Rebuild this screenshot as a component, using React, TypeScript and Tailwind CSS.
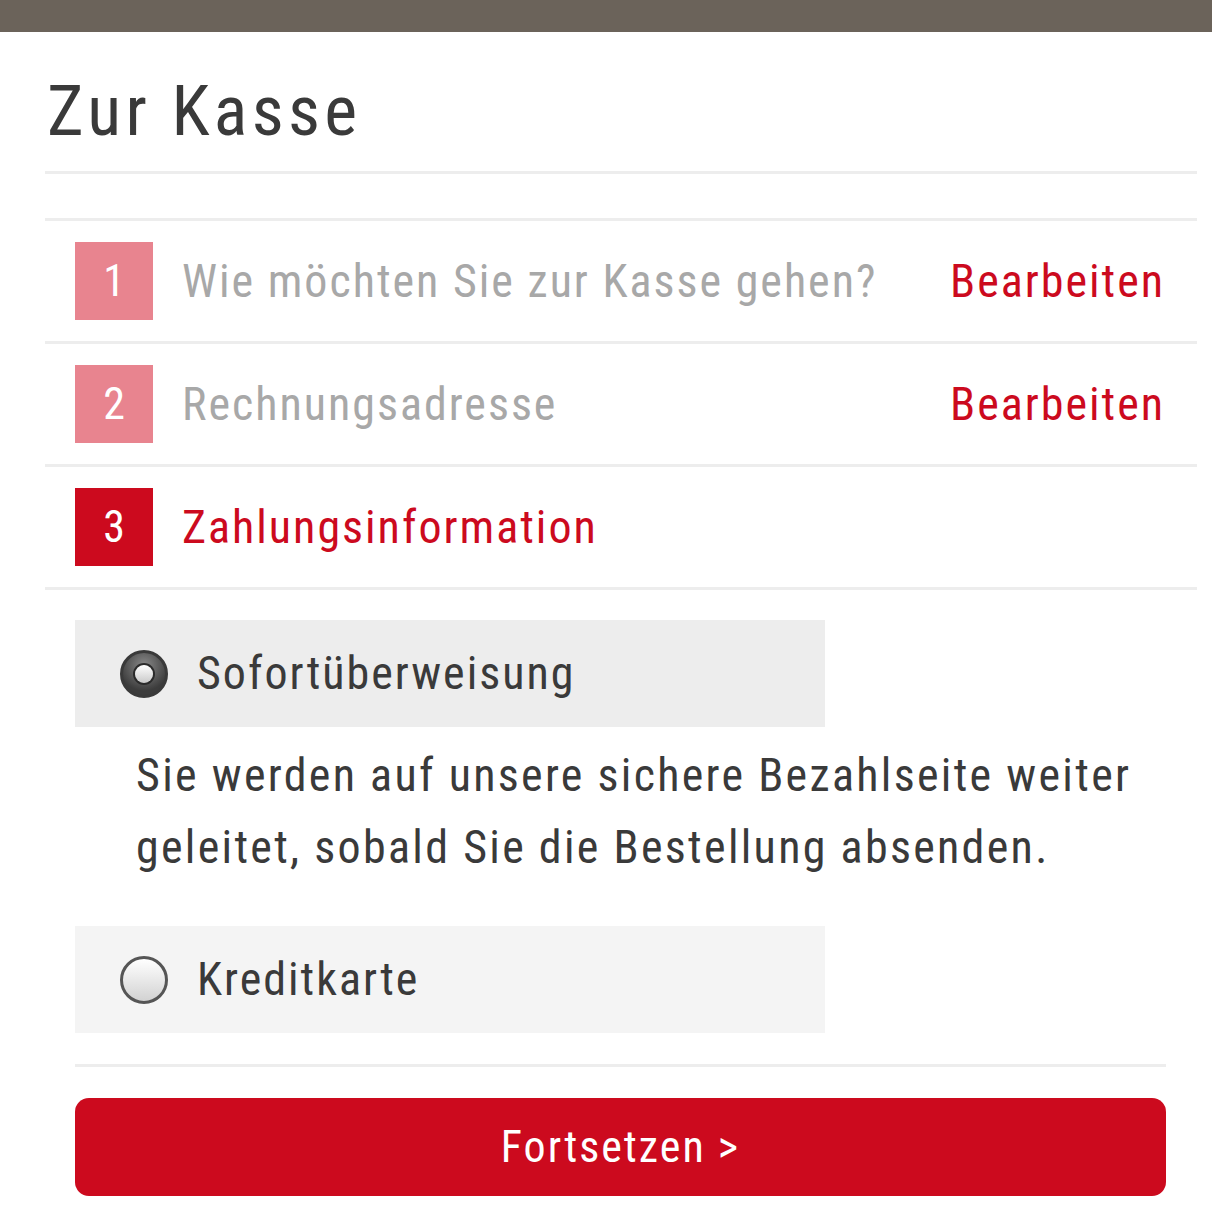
import React from "react";

function Radio({ checked }: { checked: boolean }) {
  if (checked) {
    return (
      <span className="relative flex h-[48px] w-[48px] shrink-0 items-center justify-center rounded-full border-[3px] border-[#3a3a3a] bg-[radial-gradient(circle_at_50%_30%,#8a8a8a,#3c3c3c_70%)]">
        <span className="h-[18px] w-[18px] rounded-full bg-[linear-gradient(#ffffff,#c9c9c9)] shadow-[0_0_0_2px_#2a2a2a]" />
      </span>
    );
  }
  return (
    <span className="h-[48px] w-[48px] shrink-0 rounded-full border-[3px] border-[#555] bg-[linear-gradient(#ffffff,#d2d2d2)]" />
  );
}

function StepRow({
  n,
  label,
  active,
  edit,
}: {
  n: number;
  label: string;
  active?: boolean;
  edit?: boolean;
}) {
  return (
    <div className="flex h-[123px] items-center border-b-[3px] border-[#ededed] pl-[30px] pr-[32px]">
      <div
        className={
          active
            ? "flex h-[78px] w-[78px] shrink-0 items-center justify-center bg-[#cc0a1e] text-[44px] text-white"
            : "flex h-[78px] w-[78px] shrink-0 items-center justify-center bg-[#e8848f] text-[44px] text-white"
        }
      >
        {n}
      </div>
      <div
        className={
          active
            ? "ml-[29px] flex-1 whitespace-nowrap text-[46px] tracking-[2px] text-[#cc0a1e]"
            : "ml-[29px] flex-1 whitespace-nowrap text-[46px] tracking-[2px] text-[#a8a8a8]"
        }
      >
        {label}
      </div>
      {edit && (
        <div className="whitespace-nowrap text-[46px] tracking-[2px] text-[#cc0a1e]">Bearbeiten</div>
      )}
    </div>
  );
}

export default function App() {
  return (
    <div className="min-h-[1213px] w-[1212px] bg-white font-['Roboto',sans-serif] font-stretch-[75%] text-[#3a3a3a]">
      <div className="h-[32px] bg-[#6b635a]" />
      <div className="pl-[45px] pr-[15px]">
        <div className="flex h-[142px] items-center border-b-[3px] border-[#ededed] pl-[2px]">
          <h1 className="mt-[18px] text-[70px] leading-none tracking-[4.3px] text-[#3a3a3a]">
            Zur Kasse
          </h1>
        </div>
        <div className="mt-[44px] border-t-[3px] border-[#ededed]">
          <StepRow n={1} label="Wie möchten Sie zur Kasse gehen?" edit />
          <StepRow n={2} label="Rechnungsadresse" edit />
          <StepRow n={3} label="Zahlungsinformation" active />
        </div>
        <div className="pl-[30px] pr-[31px] pt-[30px]">
          <div className="flex h-[107px] w-[750px] items-center bg-[#ededed] pl-[45px]">
            <Radio checked />
            <span className="ml-[29px] whitespace-nowrap text-[46px] tracking-[2px]">Sofortüberweisung</span>
          </div>
          <p className="mb-[43px] ml-[61px] mt-[12px] whitespace-nowrap text-[46px] leading-[72px] tracking-[2.3px]">
            Sie werden auf unsere sichere Bezahlseite weiter
            <br />
            geleitet, sobald Sie die Bestellung absenden.
          </p>
          <div className="flex h-[107px] w-[750px] items-center bg-[#f4f4f4] pl-[45px]">
            <Radio checked={false} />
            <span className="ml-[29px] whitespace-nowrap text-[46px] tracking-[2px]">Kreditkarte</span>
          </div>
          <div className="mt-[31px] border-t-[3px] border-[#ededed]" />
          <button className="mt-[31px] flex h-[98px] w-full items-center justify-center rounded-[14px] bg-[#cc0a1e] text-[44px] tracking-[2px] text-white">
            Fortsetzen &gt;
          </button>
        </div>
      </div>
    </div>
  );
}
